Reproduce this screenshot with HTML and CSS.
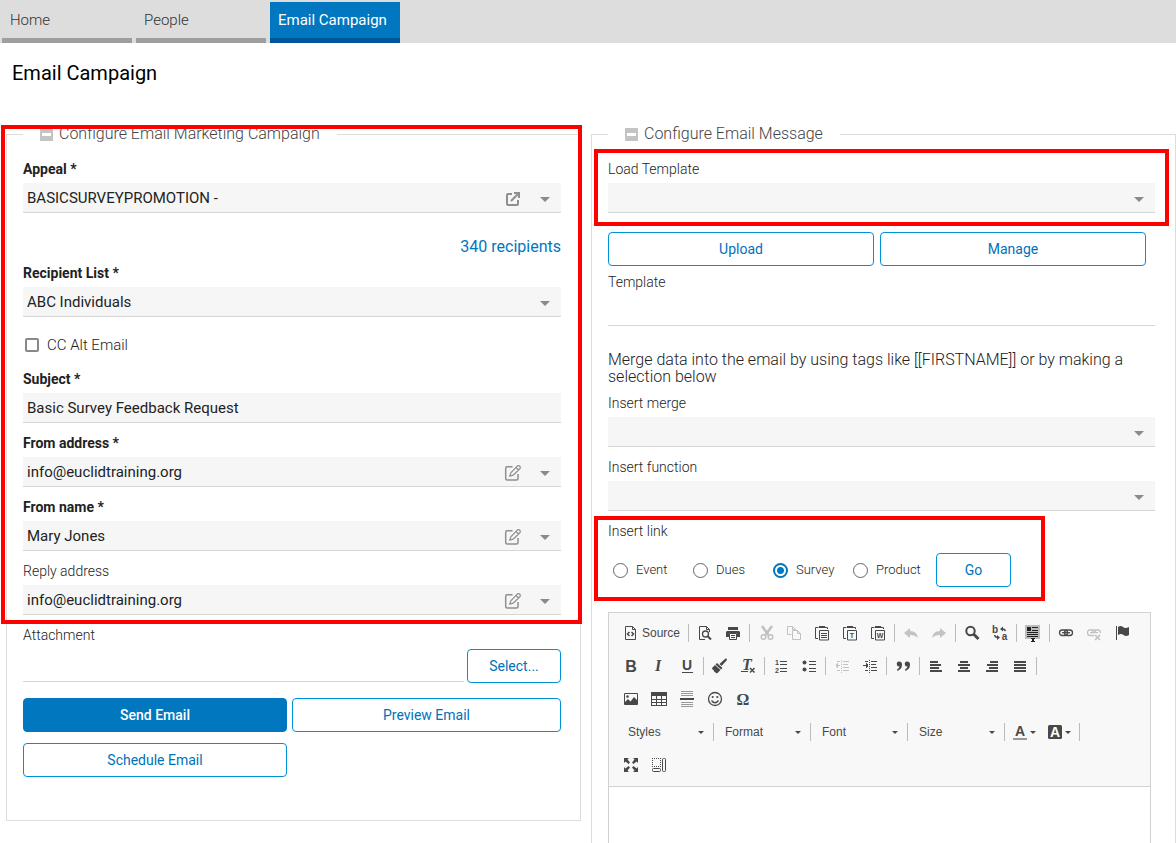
FILE: index.html
```html
<!DOCTYPE html>
<html lang="en">
<head>
  <meta charset="UTF-8" />
  <meta name="viewport" content="width=device-width, initial-scale=1.0" />
  <title>Email Campaign</title>
  <link rel="stylesheet" href="styles.css">
</head>
<body>
  <!-- shared icons -->
  <svg class="sprite" aria-hidden="true">
    <symbol id="caret" viewBox="0 0 10 5"><path d="M0 0h10L5 5z" fill="#8a8a8a"/></symbol>
    <symbol id="mini-caret" viewBox="0 0 6 3"><path d="M0 0h6L3 3z" fill="#484848"/></symbol>
    <symbol id="edit" viewBox="0 0 18 18">
      <g fill="none" stroke="#8f8f8f">
        <path d="M8.500 2.700H3.200Q1.700 2.700 1.700 4.200V14.500Q1.700 16 3.200 16H12.500Q14 16 14 14.500V10" stroke-width="1.500"/>
        <path d="M5.800 12.200L6.800 8.800L13.200 2.200Q14.500 1 15.800 2.200Q17 3.500 15.800 4.800L9.200 11.200zM12 3.500L14.500 6" stroke-width="1.200"/>
      </g>
    </symbol>
    <symbol id="minus" viewBox="0 0 13 13"><path d="M0 0h13v13H0z" fill="#c4c4c4"/><path d="M2 5h9v3H2z" fill="#fff"/></symbol>
  </svg>

  <nav class="tabs">
    <a href="#">Home</a>
    <a href="#">People</a>
    <a href="#" class="active">Email Campaign</a>
  </nav>

  <main>
    <h1>Email Campaign</h1>
    <form class="columns" onsubmit="return false">

      <fieldset>
        <legend><button type="button" class="collapse" aria-label="Collapse"><svg><use href="#minus"/></svg></button>Configure Email Marketing Campaign</legend>
        <div class="marked marked-campaign">
          <div class="field required">
            <label for="appeal">Appeal *</label>
            <div class="box">
              <select id="appeal"><option>BASICSURVEYPROMOTION -</option></select>
              <button type="button" class="box-icon" aria-label="Open appeal">
                <svg viewBox="0 0 18 18" fill="none" stroke="#8f8f8f" stroke-width="2"><path d="M8 4H4Q3 4 3 5V14Q3 15 4 15H13Q14 15 14 14V10"/><path d="M10 3H15V8M15 3L7 11"/></svg>
              </button>
              <svg class="caret"><use href="#caret"/></svg>
            </div>
          </div>
          <a href="#" class="recipients">340 recipients</a>
          <div class="field required">
            <label for="list">Recipient List *</label>
            <div class="box">
              <select id="list"><option>ABC Individuals</option></select>
              <svg class="caret"><use href="#caret"/></svg>
            </div>
          </div>
          <div class="check">
            <input type="checkbox" id="cc"><label for="cc">CC Alt Email</label>
          </div>
          <div class="field required">
            <label for="subject">Subject *</label>
            <div class="box"><input type="text" id="subject" value="Basic Survey Feedback Request"></div>
          </div>
          <div class="field required">
            <label for="from-address">From address *</label>
            <div class="box">
              <select id="from-address"><option>info@euclidtraining.org</option></select>
              <button type="button" class="box-icon" aria-label="Edit from address"><svg><use href="#edit"/></svg></button>
              <svg class="caret"><use href="#caret"/></svg>
            </div>
          </div>
          <div class="field required">
            <label for="from-name">From name *</label>
            <div class="box">
              <select id="from-name"><option>Mary Jones</option></select>
              <button type="button" class="box-icon" aria-label="Edit from name"><svg><use href="#edit"/></svg></button>
              <svg class="caret"><use href="#caret"/></svg>
            </div>
          </div>
          <div class="field">
            <label for="reply">Reply address</label>
            <div class="box">
              <select id="reply"><option>info@euclidtraining.org</option></select>
              <button type="button" class="box-icon" aria-label="Edit reply address"><svg><use href="#edit"/></svg></button>
              <svg class="caret"><use href="#caret"/></svg>
            </div>
          </div>
        </div>
        <label for="attachment">Attachment</label>
        <div class="attach">
          <input type="text" id="attachment">
          <button type="button" class="btn">Select...</button>
        </div>
        <div class="actions">
          <button type="button" class="btn primary">Send Email</button>
          <button type="button" class="btn">Preview Email</button>
          <button type="button" class="btn">Schedule Email</button>
        </div>
      </fieldset>

      <fieldset class="message">
        <legend><button type="button" class="collapse" aria-label="Collapse"><svg><use href="#minus"/></svg></button>Configure Email Message</legend>
        <div class="field marked marked-template">
          <label for="load">Load Template</label>
          <div class="box">
            <select id="load"><option></option></select>
            <svg class="caret"><use href="#caret"/></svg>
          </div>
        </div>
        <div class="template-buttons">
          <button type="button" class="btn">Upload</button>
          <button type="button" class="btn">Manage</button>
        </div>
        <div class="field">
          <label for="template">Template</label>
          <div class="box plain"><input type="text" id="template"></div>
        </div>
        <p class="hint">Merge data into the email by using tags like [[FIRSTNAME]] or by making a selection below</p>
        <div class="field">
          <label for="merge">Insert merge</label>
          <div class="box">
            <select id="merge"><option></option></select>
            <svg class="caret"><use href="#caret"/></svg>
          </div>
        </div>
        <div class="field">
          <label for="function">Insert function</label>
          <div class="box">
            <select id="function"><option></option></select>
            <svg class="caret"><use href="#caret"/></svg>
          </div>
        </div>
        <div class="marked marked-link" role="radiogroup" aria-labelledby="link-label">
          <span class="group-label" id="link-label">Insert link</span>
          <div class="radios">
            <label><input type="radio" name="link">Event</label>
            <label><input type="radio" name="link">Dues</label>
            <label><input type="radio" name="link" checked>Survey</label>
            <label><input type="radio" name="link">Product</label>
            <button type="button" class="btn go">Go</button>
          </div>
        </div>

        <div class="editor">
          <div class="toolbar">
            <div class="tool-row">
              <button type="button" class="tool source"><svg viewBox="0 0 16 16" fill="none" stroke="#484848"><path d="M2.500 1.500H9.500L12.500 4.500V14.500H2.500z" /><path d="M9.500 1.500V4.500H12.500"/><path d="M6.500 7L4.500 9L6.500 11M8.500 7L10.500 9L8.500 11" stroke-width="1.500"/></svg><span>Source</span></button>
              <i class="sep"></i>
              <button type="button" class="tool" aria-label="Preview"><svg viewBox="0 0 16 16" fill="none" stroke="#484848"><path d="M8 14.500H2.500V1.500H9.500L12.500 4.500V7M9.500 1.500V4.500H12.500"/><circle cx="8.500" cy="9" r="3" stroke-width="1.300"/><path d="M10.500 11L14 14.500" stroke-width="2"/></svg></button>
              <button type="button" class="tool" aria-label="Print"><svg viewBox="0 0 16 16" fill="#484848"><path d="M3 2h10v3H3zM2 6h12l1 1v5h-3V8H4v4H1V7z"/><path d="M4.500 8.500h7v6h-7z" fill="none" stroke="#484848"/><path d="M6 10h4v1H6zM6 12h4v1H6z"/></svg></button>
              <i class="sep"></i>
              <button type="button" class="tool" aria-label="Cut" disabled><svg viewBox="0 0 16 16" fill="none" stroke="#484848"><path d="M4 1L10.500 10M14 1L7.500 10" stroke-width="2.600"/><circle cx="5.500" cy="12" r="2.300" stroke-width="1.500"/><circle cx="12.500" cy="12" r="2.300" stroke-width="1.500"/></svg></button>
              <button type="button" class="tool" aria-label="Copy" disabled><svg viewBox="0 0 16 16" fill="none" stroke="#484848"><path d="M5.500 9.500H1.500V1.500H6.500L9.500 4.500V5.500M6.500 1.500V4.500H9"/><path d="M6.500 5.500H11.500L14.500 8.500V14.500H6.500zM11.500 5.500V8.500H14.500"/></svg></button>
              <button type="button" class="tool" aria-label="Paste"><svg viewBox="0 0 16 16" fill="none" stroke="#484848"><path d="M4.500 2.500H1.500V13.500H4M10.500 2.500H13.500V4" /><path d="M5 1h6v2H5z" fill="#484848" stroke="none"/><path d="M5.500 5.500H14.500V15H5.500zM7 8.500H13M7 10.500H13M7 12.500H13"/></svg></button>
              <button type="button" class="tool" aria-label="Paste as plain text"><svg viewBox="0 0 16 16" fill="none" stroke="#484848"><path d="M4.500 2.500H1.500V13.500H4M10.500 2.500H13.500V4"/><path d="M5 1h6v2H5z" fill="#484848" stroke="none"/><path d="M5.500 5.500H14.500V15H5.500z"/><text x="10" y="13" class="tiny">T</text></svg></button>
              <button type="button" class="tool" aria-label="Paste from Word"><svg viewBox="0 0 16 16" fill="none" stroke="#484848"><path d="M4.500 2.500H1.500V13.500H4M10.500 2.500H13.500V4"/><path d="M5 1h6v2H5z" fill="#484848" stroke="none"/><path d="M5.500 5.500H14.500V15H5.500z"/><text x="10" y="13" class="tiny">W</text></svg></button>
              <i class="sep"></i>
              <button type="button" class="tool" aria-label="Undo" disabled><svg viewBox="0 0 16 16" fill="#484848"><path d="M7 3V6Q14 6 15 13Q12 10 7 10V13L1 8z"/></svg></button>
              <button type="button" class="tool" aria-label="Redo" disabled><svg viewBox="0 0 16 16" fill="#484848"><path d="M9 3V6Q2 6 1 13Q4 10 9 10V13L15 8z"/></svg></button>
              <i class="sep"></i>
              <button type="button" class="tool" aria-label="Find"><svg viewBox="0 0 16 16" fill="none" stroke="#484848"><circle cx="6.500" cy="6" r="4.200" stroke-width="2"/><path d="M9.500 9L14.500 14" stroke-width="3"/></svg></button>
              <button type="button" class="tool" aria-label="Replace"><svg viewBox="0 0 16 16" fill="none" stroke="#484848"><text x="3" y="8" class="letter">b</text><text x="12.500" y="15" class="letter">a</text><path d="M13.500 6Q13 4 10 4M2.500 10Q3 12.500 6 12.500" stroke-width="1.300"/><path d="M11 1.500V6.500L8 4zM5 10V15L8 12.500z" fill="#484848" stroke="none"/></svg></button>
              <i class="sep"></i>
              <button type="button" class="tool" aria-label="Select all"><svg viewBox="0 0 16 16" shape-rendering="crispEdges"><path d="M0 0h15v14H0z" fill="#bdbdbd"/><path d="M2 2h4v4H2zM7 2h6v1H7zM7 5h6v1H7zM2 7h11v1H2zM2 9h11v1H2zM2 11h11v1H2zM6 13h4v1H8.500v2H10v1H6v-1h1v-2H6z" fill="#222"/></svg></button>
              <i class="sep"></i>
              <button type="button" class="tool" aria-label="Link"><svg viewBox="0 0 16 16" fill="none" stroke="#484848" stroke-width="1.300"><rect x="1.500" y="5" width="8" height="5.500" rx="2.700"/><rect x="6.500" y="5" width="8" height="5.500" rx="2.700"/><path d="M4 7.700h8"/></svg></button>
              <button type="button" class="tool" aria-label="Unlink" disabled><svg viewBox="0 0 16 16" fill="none" stroke="#484848" stroke-width="1.300"><path d="M8 10.500H4Q1.500 10.500 1.500 7.700T4 5H7Q9.500 5 9.500 7.700M6.500 7.700Q6.500 5 9 5H12Q14.500 5 14.500 8M4 7.700H12"/><path d="M9 10L14 15M14 10L9 15" stroke-width="1.700"/></svg></button>
              <button type="button" class="tool" aria-label="Anchor"><svg viewBox="0 0 16 16" fill="#484848"><path d="M2 1h1v14H2zM4 2Q7 0 9 2T15 2V10Q12 12 9.500 10T4 10z"/></svg></button>
            </div>

            <div class="tool-row">
              <button type="button" class="tool" aria-label="Bold"><svg viewBox="0 0 16 16"><text x="8" y="14" class="glyph">B</text></svg></button>
              <button type="button" class="tool" aria-label="Italic"><svg viewBox="0 0 16 16"><text x="7" y="13" class="glyph serif italic">I</text></svg></button>
              <button type="button" class="tool" aria-label="Underline"><svg viewBox="0 0 16 16"><text x="8" y="12" class="glyph small">U</text><path d="M3 14h11v1H3z" fill="#484848"/></svg></button>
              <i class="sep"></i>
              <button type="button" class="tool" aria-label="Copy formatting"><svg viewBox="0 0 16 16" fill="#484848"><path d="M14.500 0.500L15 2L9.500 8L7.500 6L13.500 0.500zM5 5L10.500 10L9 11.500L3.500 6.500zM3 7L8.500 12L5 15.500L3.500 14.500L2.500 14L1.500 12L0.500 11.500L0 10z"/></svg></button>
              <button type="button" class="tool" aria-label="Remove format"><svg viewBox="0 0 16 16"><text x="7" y="12" class="glyph serif italic">T</text><path d="M1 13.500h7" stroke="#484848"/><path d="M10 10L14.500 14.500M14.500 10L10 14.500" stroke="#484848" stroke-width="1.500"/></svg></button>
              <i class="sep"></i>
              <button type="button" class="tool" aria-label="Numbered list"><svg viewBox="0 0 16 16" fill="#484848"><text x="4" y="7" class="tiny">1</text><text x="4" y="15" class="tiny">2</text><path d="M7 3h7v1H7zM7 6h7v1H7zM7 10h7v1H7zM7 13h7v1H7z"/></svg></button>
              <button type="button" class="tool" aria-label="Bulleted list"><svg viewBox="0 0 16 16" fill="#484848"><circle cx="3.500" cy="4.500" r="2"/><circle cx="3.500" cy="11.500" r="2"/><path d="M8 3h7v1H8zM8 6h7v1H8zM8 10h7v1H8zM8 13h7v1H8z"/></svg></button>
              <i class="sep"></i>
              <button type="button" class="tool" aria-label="Decrease indent" disabled><svg viewBox="0 0 16 16" fill="#484848" shape-rendering="crispEdges"><path d="M7 2h1v1H7zM7 4h1v1H7zM7 6h1v1H7zM7 8h1v1H7zM7 10h1v1H7zM7 12h1v1H7zM7 14h1v1H7zM9 3h6v1H9zM9 6h5v1H9zM9 9h6v1H9zM9 12h6v1H9zM2 7h4v1H2zM2 6h1v3H2zM3 5h1v5H3zM3 3h3v1H3zM3 12h3v1H3z"/></svg></button>
              <button type="button" class="tool" aria-label="Increase indent"><svg viewBox="0 0 16 16" fill="#484848" shape-rendering="crispEdges"><path d="M7 2h1v1H7zM7 4h1v1H7zM7 6h1v1H7zM7 8h1v1H7zM7 10h1v1H7zM7 12h1v1H7zM7 14h1v1H7zM9 3h6v1H9zM9 6h5v1H9zM9 9h6v1H9zM9 12h6v1H9zM1 7h5v1H1zM5 6h1v3H5zM4 5h1v5H4zM3 3h3v1H3zM3 12h3v1H3z"/></svg></button>
              <i class="sep"></i>
              <button type="button" class="tool" aria-label="Block quote"><svg viewBox="0 0 16 16" fill="#484848"><path d="M4 3.500A2.500 2.500 0 1 0 4.500 8.500Q4 10.500 2 11.500L2.500 13Q7 11 7 6.500Q7 3.500 4 3.500zM12 3.500A2.500 2.500 0 1 0 12.500 8.500Q12 10.500 10 11.500L10.500 13Q15 11 15 6.500Q15 3.500 12 3.500z"/></svg></button>
              <i class="sep"></i>
              <button type="button" class="tool" aria-label="Align left"><svg viewBox="0 0 16 16" fill="#484848"><path d="M2 3h8v2H2zM2 6h11v2H2zM2 9h9v2H2zM2 12h12v2H2z"/></svg></button>
              <button type="button" class="tool" aria-label="Center"><svg viewBox="0 0 16 16" fill="#484848"><path d="M4 3h8v2H4zM2 6h12v2H2zM4 9h8v2H4zM2 12h12v2H2z"/></svg></button>
              <button type="button" class="tool" aria-label="Align right"><svg viewBox="0 0 16 16" fill="#484848"><path d="M6 3h8v2H6zM3 6h11v2H3zM5 9h9v2H5zM2 12h12v2H2z"/></svg></button>
              <button type="button" class="tool" aria-label="Justify"><svg viewBox="0 0 16 16" fill="#484848"><path d="M2 3h12v2H2zM2 6h12v2H2zM2 9h12v2H2zM2 12h12v2H2z"/></svg></button>
              <i class="sep"></i>
            </div>

            <div class="tool-row">
              <button type="button" class="tool" aria-label="Image"><svg viewBox="0 0 16 16"><path d="M1.500 2.500H14.500V13.500H1.500z" fill="none" stroke="#484848"/><circle cx="4.500" cy="5.500" r="1.300" fill="#484848"/><path d="M2 13V11L5 8L7.500 10.500L11 6L14 9V13z" fill="#484848"/></svg></button>
              <button type="button" class="tool" aria-label="Table"><svg viewBox="0 0 16 16" fill="#484848" shape-rendering="crispEdges"><path d="M0 1h16v4H0zM0 5h1v10H0zM15 5h1v10h-1zM5 5h1v10H5zM10 5h1v10h-1zM0 8h16v1H0zM0 11h16v1H0zM0 14h16v1H0z"/></svg></button>
              <button type="button" class="tool" aria-label="Horizontal line"><svg viewBox="0 0 16 16" shape-rendering="crispEdges"><path d="M2 0h12v1H2zM2 2h12v1H2zM2 4h12v1H2zM2 11h12v1H2zM2 13h12v1H2zM2 15h12v1H2z" fill="#999"/><path d="M1 7h14v2H1z" fill="#484848"/></svg></button>
              <button type="button" class="tool" aria-label="Smiley"><svg viewBox="0 0 16 16" fill="none" stroke="#484848" stroke-width="1.300"><circle cx="8" cy="8" r="6.500"/><path d="M4.500 9.500Q8 14 11.500 9.500"/><circle cx="5.700" cy="6" r="1.100" fill="#484848" stroke="none"/><circle cx="10.300" cy="6" r="1.100" fill="#484848" stroke="none"/></svg></button>
              <button type="button" class="tool" aria-label="Special character"><svg viewBox="0 0 16 16"><text x="8" y="14" class="glyph serif">Ω</text></svg></button>
            </div>

            <div class="tool-row combos">
              <div class="combo"><select aria-label="Styles"><option>Styles</option></select><svg><use href="#mini-caret"/></svg></div>
              <i class="sep"></i>
              <div class="combo"><select aria-label="Format"><option>Format</option></select><svg><use href="#mini-caret"/></svg></div>
              <i class="sep"></i>
              <div class="combo"><select aria-label="Font"><option>Font</option></select><svg><use href="#mini-caret"/></svg></div>
              <i class="sep"></i>
              <div class="combo"><select aria-label="Size"><option>Size</option></select><svg><use href="#mini-caret"/></svg></div>
              <i class="sep"></i>
              <button type="button" class="tool color" aria-label="Text color"><svg viewBox="0 0 16 16"><text x="8" y="12" class="glyph small">A</text><path d="M1 14h14v2H1z" fill="#999"/></svg><svg class="mini"><use href="#mini-caret"/></svg></button>
              <button type="button" class="tool color" aria-label="Background color"><svg viewBox="0 0 16 16"><rect x="1" y="1" width="14" height="14" rx="1.500" fill="#484848"/><text x="8" y="13" class="glyph white">A</text></svg><svg class="mini"><use href="#mini-caret"/></svg></button>
              <i class="sep"></i>
            </div>

            <div class="tool-row">
              <button type="button" class="tool" aria-label="Maximize"><svg viewBox="0 0 16 16" fill="#484848"><path d="M1 1h5L4.500 2.500L7 5.500L5.500 7L2.500 4.500L1 6zM15 1v5l-1.500-1.500L10.500 7L9 5.500L11.500 2.500L10 1zM1 15v-5l1.500 1.500L5.500 9L7 10.500L4.500 13.500L6 15zM15 15h-5l1.500-1.500L9 10.500L10.500 9L13.500 11.500L15 10z"/></svg></button>
              <button type="button" class="tool" aria-label="Show blocks"><svg viewBox="0 0 16 16" fill="none" stroke="#484848"><path d="M1 1.500H10M1 9.500H10M1.500 1V10M9.500 1V10" stroke-dasharray="1 1"/><rect x="1.500" y="11.500" width="8" height="3" rx="1"/><rect x="11.500" y="1.500" width="3" height="13" rx="1"/></svg></button>
            </div>
          </div>
          <textarea class="editor-body" aria-label="Email body"></textarea>
        </div>
      </fieldset>
    </form>
  </main>
</body>
</html>
```
FILE: styles.css
```css
* {
  box-sizing: border-box;
}

body {
  margin: 0;
  height: 100vh;
  display: flex;
  flex-direction: column;
  overflow: hidden;
  background: #fff;
  color: #222;
  font-family: Roboto, sans-serif;
  font-weight: 300;
  font-size: 14px;
  line-height: 16px;
}

button,
input,
select,
textarea {
  font: inherit;
  color: inherit;
  margin: 0;
  padding: 0;
  border: none;
  background: none;
  border-radius: 0;
}

button {
  cursor: pointer;
}

a {
  text-decoration: none;
}

svg {
  display: block;
}

.sprite {
  display: none;
}

/* tabs */
.tabs {
  display: flex;
  flex: none;
  gap: 4px;
  padding: 2px 2px 0;
  background: #ddd;
}

.tabs a {
  width: 130px;
  height: 41px;
  padding: 10px 8px 0;
  border-bottom: 5px solid #9e9e9e;
  color: #333;
  font-size: 15px;
}

.tabs .active {
  background: #0077be;
  border-color: #00559a;
  color: #fff;
  font-weight: 400;
}

main {
  flex: 1;
  min-height: 0;
  overflow-y: auto;
  scrollbar-width: none;
}

h1 {
  margin: 0;
  padding: 18px 12px 40px;
  font-size: 20px;
  font-weight: 400;
  line-height: 24px;
  color: #000;
}

.columns {
  display: grid;
  grid-template-columns: 575fr 585fr;
  align-items: start;
  gap: 10px;
  padding-left: 6px;
}

fieldset {
  min-width: 0;
  margin: 0;
  padding: 18px 19px 43px 16px;
  border: 1px solid #ddd;
}

.message {
  padding-right: 20px;
}

legend {
  display: flex;
  align-items: center;
  gap: 6px;
  padding: 0 17px;
  font-size: 16px;
  line-height: 18px;
  color: #444;
}

.collapse svg {
  width: 13px;
  height: 13px;
}

/* fields */
.field {
  margin-bottom: 12px;
}

.field label,
fieldset > label,
.group-label {
  display: block;
  margin-bottom: 6px;
}

.required label {
  font-weight: 700;
}

.box {
  display: grid;
  grid-template-columns: 1fr 32px 32px;
  align-items: center;
  height: 30px;
  background: #f6f6f6;
  border-bottom: 1px solid #d6d6d6;
  font-size: 15px;
  font-weight: 400;
}

.plain {
  background: none;
}

.box select,
.box input {
  grid-area: 1 / 1 / 2 / 4;
  height: 29px;
  width: 100%;
  padding: 0 4px;
  appearance: none;
}

.box-icon {
  grid-area: 1 / 2;
  justify-self: center;
  margin-top: 2px;
}

.box-icon svg {
  width: 18px;
  height: 18px;
}

.caret {
  grid-area: 1 / 3;
  justify-self: center;
  width: 10px;
  height: 5px;
  margin-top: 4px;
  pointer-events: none;
}

.recipients {
  display: block;
  margin: 26px 0 10px;
  text-align: right;
  font-size: 16px;
  color: #0077be;
  font-weight: 400;
}

.check {
  display: flex;
  align-items: center;
  gap: 8px;
  margin: 20px 0 18px;
  padding-left: 2px;
  font-size: 15px;
}

.check input {
  width: 14px;
  height: 14px;
  appearance: none;
  border: 2px solid #888;
  border-radius: 2px;
}

.check input:checked {
  background: #0077be;
}

/* buttons */
.btn {
  height: 34px;
  padding: 0 10px;
  border: 1px solid #0092d6;
  border-radius: 4px;
  background: #fff;
  color: #0072b9;
  font-size: 14px;
  font-weight: 400;
}

.primary {
  background: #0077be;
  border-color: #0077be;
  color: #fff;
  font-weight: 500;
}

.attach {
  display: flex;
  gap: 3px;
  margin-bottom: 15px;
}

.attach input {
  flex: 1;
  min-width: 0;
  height: 33px;
  border-bottom: 1px solid #d6d6d6;
}

.attach .btn {
  width: 94px;
}

.actions {
  display: grid;
  grid-template-columns: 264fr 269fr;
  gap: 11px 5px;
}

.template-buttons {
  display: grid;
  grid-template-columns: 1fr 1fr;
  gap: 6px;
  margin: 19px 9px 8px 0;
}

.hint {
  margin: 25px 0 10px;
  font-size: 16px;
  line-height: 17px;
}

.radios {
  display: flex;
  align-items: center;
  margin: 14px 0 25px;
  font-size: 13px;
}

.radios label {
  display: flex;
  align-items: center;
  gap: 8px;
  width: 80px;
  padding-left: 5px;
}

.radios input {
  flex: none;
  width: 15px;
  height: 15px;
  appearance: none;
  border: 1px solid #666;
  border-radius: 50%;
}

.radios input:checked {
  border: 2px solid #0077be;
  background: radial-gradient(#0077be 3px, #fff 4px);
}

.go {
  width: 75px;
  margin-left: 8px;
}

/* red call-out frames drawn over the form */
.marked {
  position: relative;
}

.marked::after {
  content: "";
  position: absolute;
  border: 4px solid #f00;
  pointer-events: none;
}

.marked-campaign::after {
  inset: -36px -21px -9px -22px;
}

.marked-template::after {
  inset: -12px -14px -13px;
}

.marked-link::after {
  inset: -7px 110px -14px -14px;
}

/* rich text editor */
.editor {
  margin-right: 4px;
  border: 1px solid #d1d1d1;
}

.toolbar {
  display: flex;
  flex-direction: column;
  gap: 7px;
  padding: 7px 8px 8px;
  background: #f8f8f8;
  border-bottom: 1px solid #d1d1d1;
  color: #484848;
  font: 12px/16px "Liberation Sans", Arial, sans-serif;
}

.tool-row {
  display: flex;
  align-items: center;
  height: 26px;
}

.tool {
  display: flex;
  align-items: center;
  flex: none;
  height: 26px;
  padding: 0 6px;
}

.tool svg {
  width: 16px;
  height: 16px;
  overflow: visible;
}

.tool:disabled svg {
  opacity: 0.3;
}

.source {
  gap: 3px;
}

.sep {
  flex: none;
  width: 1px;
  height: 18px;
  margin: 0 2px;
  background: #bcbcbc;
}

.combos {
  padding-left: 2px;
}

.combo {
  display: grid;
  grid-template-columns: 1fr 13px;
  align-items: center;
  width: 92px;
}

.combo select {
  grid-area: 1 / 1 / 2 / 3;
  padding-left: 9px;
  appearance: none;
}

.combo svg {
  grid-area: 1 / 2;
  width: 6px;
  height: 3px;
  margin-top: 1px;
  pointer-events: none;
}

.color {
  gap: 2px;
  padding: 0 6px 0 5px;
}

.tool .mini {
  width: 6px;
  height: 3px;
}

.glyph,
.tiny,
.letter {
  fill: #484848;
  stroke: none;
  text-anchor: middle;
  font-family: "Liberation Sans", Arial, sans-serif;
  font-weight: 700;
  font-size: 16px;
}

.small {
  font-size: 14px;
}

.serif {
  font-family: "Liberation Serif", serif;
  font-size: 16px;
}

.italic {
  font-style: italic;
}

.white {
  fill: #fff;
  font-size: 14px;
}

.tiny {
  font-size: 7px;
}

.letter {
  font-size: 10px;
}

.editor-body {
  display: block;
  width: 100%;
  height: 200px;
  padding: 20px;
  resize: none;
}
```
